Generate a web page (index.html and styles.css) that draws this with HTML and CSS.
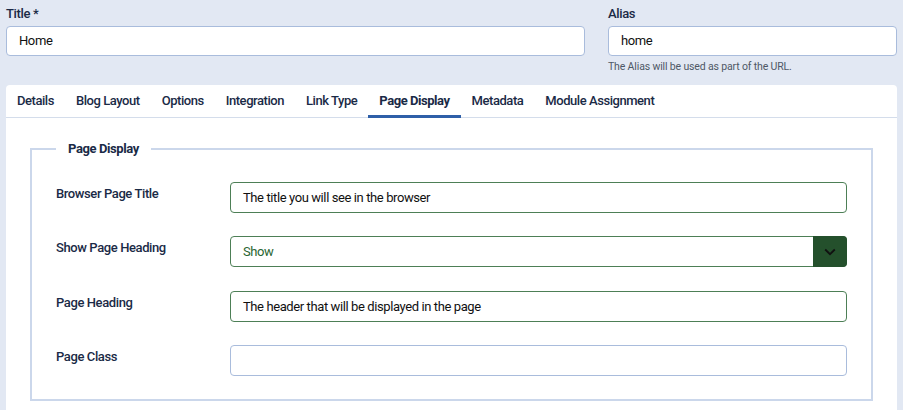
FILE: index.html
```html
<!DOCTYPE html>
<html>
<head>
<meta charset="utf-8">
<link rel="stylesheet" href="styles.css">
</head>
<body>
<div class="page">
  <div class="top">
    <div class="field title-field">
      <label class="top-label">Title *</label>
      <div class="input">Home</div>
    </div>
    <div class="field alias-field">
      <label class="top-label">Alias</label>
      <div class="input">home</div>
      <div class="help">The Alias will be used as part of the URL.</div>
    </div>
  </div>
  <div class="card">
    <div class="tabs">
      <div class="tab">Details</div>
      <div class="tab">Blog Layout</div>
      <div class="tab">Options</div>
      <div class="tab">Integration</div>
      <div class="tab">Link Type</div>
      <div class="tab active">Page Display</div>
      <div class="tab">Metadata</div>
      <div class="tab">Module Assignment</div>
    </div>
    <div class="panel">
      <fieldset class="group">
        <legend>Page Display</legend>
        <div class="rows">
          <div class="row">
            <div class="label">Browser Page Title</div>
            <div class="control valid">The title you will see in the browser</div>
          </div>
          <div class="row">
            <div class="label">Show Page Heading</div>
            <div class="control valid select"><span class="sel-text">Show</span><span class="sel-btn"><svg width="12" height="8" viewBox="0 0 12 8"><path d="M1.2 1.5 L6 6.2 L10.8 1.5" fill="none" stroke="#111" stroke-width="1.8"/></svg></span></div>
          </div>
          <div class="row">
            <div class="label">Page Heading</div>
            <div class="control valid">The header that will be displayed in the page</div>
          </div>
          <div class="row">
            <div class="label">Page Class</div>
            <div class="control"></div>
          </div>
        </div>
      </fieldset>
    </div>
  </div>
</div>
</body>
</html>
```
FILE: styles.css
```css
html, body {
  margin: 0;
  padding: 0;
  background: #e2e8f3;
  font-family: Roboto, "Liberation Sans", sans-serif;
  color: #1a2a46;
  overflow: hidden;
}
.page {
  padding: 6px 6px 0 6px;
  width: 891px;
}
.top {
  display: flex;
  gap: 23px;
  height: 79px;
}
.title-field { width: 579px; }
.alias-field { flex: 1; }
.top-label {
  display: block;
  font-size: 13px;
  letter-spacing: -0.35px;
  font-weight: 500;
  line-height: 16px;
  height: 20px;
}
.input {
  height: 28px;
  border: 1px solid #a9bcdc;
  border-radius: 4px;
  background: #fff;
  font-size: 13px;
  letter-spacing: -0.4px;
  line-height: 28px;
  padding: 0 12px;
  color: #111;
}
.help {
  font-size: 10.5px;
  letter-spacing: -0.15px;
  color: #4f5866;
  margin-top: 4px;
}
.card {
  background: #fff;
  border-radius: 4px 4px 0 0;
  height: 340px;
}
.tabs {
  display: flex;
  height: 32px;
  border-bottom: 1px solid #d4ddeb;
}
.tab {
  padding: 0 11px;
  font-size: 13px;
  letter-spacing: -0.45px;
  font-weight: 500;
  line-height: 32px;
  color: #1a2a46;
  box-sizing: border-box;
  height: 33px;
}
.tab.active {
  font-weight: 700;
  border-bottom: 3px solid #2e5fa8;
}
.panel {
  padding: 23px 24px 0 24px;
}
.group {
  margin: 0;
  min-width: 0;
  border: 2px solid #cbd7eb;
  padding: 26px 24px 22px 24px;
  height: 260px;
  box-sizing: border-box;
}
.group legend {
  font-size: 13px;
  letter-spacing: -0.4px;
  font-weight: 700;
  line-height: 15px;
  padding: 0 12px;
  margin-left: 0;
  color: #1a2a46;
}
.rows {
  display: flex;
  flex-direction: column;
  gap: 23.3px;
}
.row {
  display: flex;
}
.label {
  width: 174px;
  flex: none;
  font-size: 13px;
  letter-spacing: -0.4px;
  font-weight: 500;
  line-height: 16px;
  padding-top: 4px;
}
.control {
  flex: 1;
  height: 31px;
  border: 1px solid #a9bcdc;
  border-radius: 4px;
  font-size: 13px;
  letter-spacing: -0.4px;
  line-height: 29px;
  padding: 0 12px;
  box-sizing: border-box;
  color: #111;
}
.control.valid {
  border-color: #4d7f56;
}
.select {
  display: flex;
  justify-content: space-between;
  padding-right: 0;
}
.sel-text { color: #2a6531; }
.sel-btn {
  width: 34px;
  margin: -1px -1px -1px 0;
  background: #24502c;
  border-radius: 0 4px 4px 0;
  display: flex;
  align-items: center;
  justify-content: center;
}
```
